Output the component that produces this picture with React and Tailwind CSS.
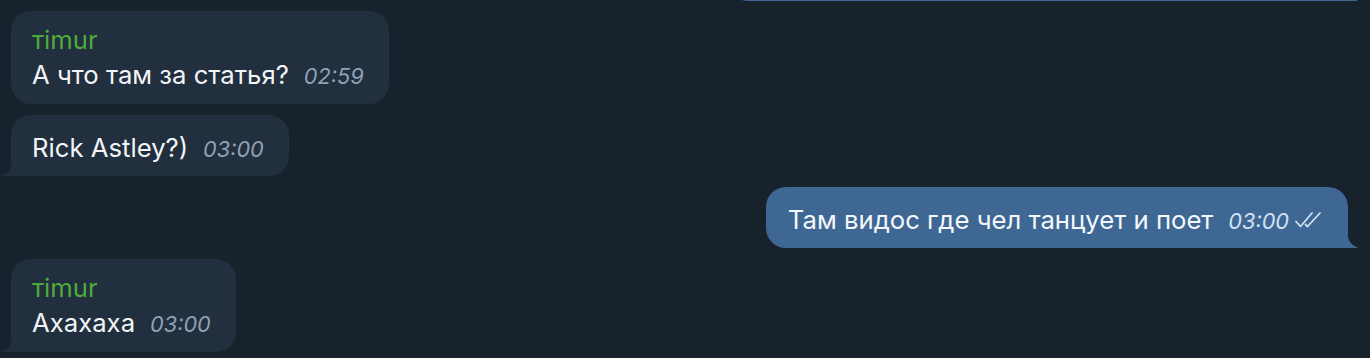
const font = { fontFamily: "Inter, 'Noto Sans', sans-serif" };

const IncomingTail = () => (
  <svg
    className="absolute bottom-0 left-[-10px]"
    width="12"
    height="18"
    viewBox="0 0 12 18"
  >
    <path d="M12 0V3C11 10 8 15 1.5 17.6C1 17.8 1 18 2 18H12Z" fill="#222f3e" />
  </svg>
);

const OutgoingTail = () => (
  <svg
    className="absolute bottom-0 right-[-11px]"
    width="12"
    height="18"
    viewBox="0 0 12 18"
  >
    <path d="M0 0V3C1 10 4 15 10.5 17.6C11 17.8 11 18 10 18H0Z" fill="#3e6893" />
  </svg>
);

const DoubleCheck = () => (
  <svg width="30" height="20" viewBox="0 0 30 20" className="ml-[4px] self-center">
    <path
      d="M3 11.5L7.5 16.5L19 3M12.5 14.5L14.5 16.5L27 3"
      fill="none"
      stroke="#d0e1f3"
      strokeWidth="1.8"
      strokeLinecap="round"
      strokeLinejoin="round"
    />
  </svg>
);

function Incoming({ name, text, time, tail }) {
  return (
    <div
      className={
        "relative ml-[11px] self-start rounded-[20px] bg-[#222f3e] pl-[21px] pr-[25px] " +
        (tail ? "rounded-bl-none " : "") +
        (name ? "pt-[11px] pb-[12px]" : "pt-[15px] pb-[11px]")
      }
    >
      {name && (
        <div className="h-[35px] text-[25.7px] leading-[35px] text-[#4fab3c]">{name}</div>
      )}
      <div className="flex h-[35px] items-baseline text-[25.7px] leading-[35px] text-[#f2f5f8]">
        <span>{text}</span>
        <span className="ml-[15px] text-[21.7px] italic leading-none text-[#90a1b5]">{time}</span>
      </div>
      {tail && <IncomingTail />}
    </div>
  );
}

function Outgoing({ text, time, className = "" }) {
  return (
    <div
      className={
        "relative rounded-[20px] rounded-br-none bg-[#3e6893] pl-[22px] pr-[25px] pt-[15px] pb-[11px] " +
        className
      }
    >
      <div className="flex h-[35px] items-baseline text-[25.7px] leading-[35px] text-[#f4f8fc]">
        <span>{text}</span>
        <span className="ml-[15px] text-[21.7px] italic leading-none text-[#d3e2f2]">{time}</span>
        <DoubleCheck />
      </div>
      <OutgoingTail />
    </div>
  );
}

export default function App() {
  return (
    <div
      className="flex h-[358px] w-full flex-col overflow-hidden bg-[#18222c]"
      style={font}
    >
      <div className="flex h-[1px] items-end justify-end overflow-hidden pr-[22px]">
        <div className="relative h-[61px] w-[620px] shrink-0 rounded-[20px] rounded-br-none bg-[#3e6893]">
          <OutgoingTail />
        </div>
      </div>
      <div className="mt-[10px] flex flex-col">
        <Incoming name="тimur" text="А что там за статья?" time="02:59" />
      </div>
      <div className="mt-[11px] flex flex-col">
        <Incoming text="Rick Astley?)" time="03:00" tail />
      </div>
      <div className="mt-[11px] flex justify-end pr-[22px]">
        <Outgoing text="Там видос где чел танцует и поет" time="03:00" />
      </div>
      <div className="mt-[11px] flex flex-col">
        <Incoming name="тimur" text="Ахахаха" time="03:00" tail />
      </div>
    </div>
  );
}
